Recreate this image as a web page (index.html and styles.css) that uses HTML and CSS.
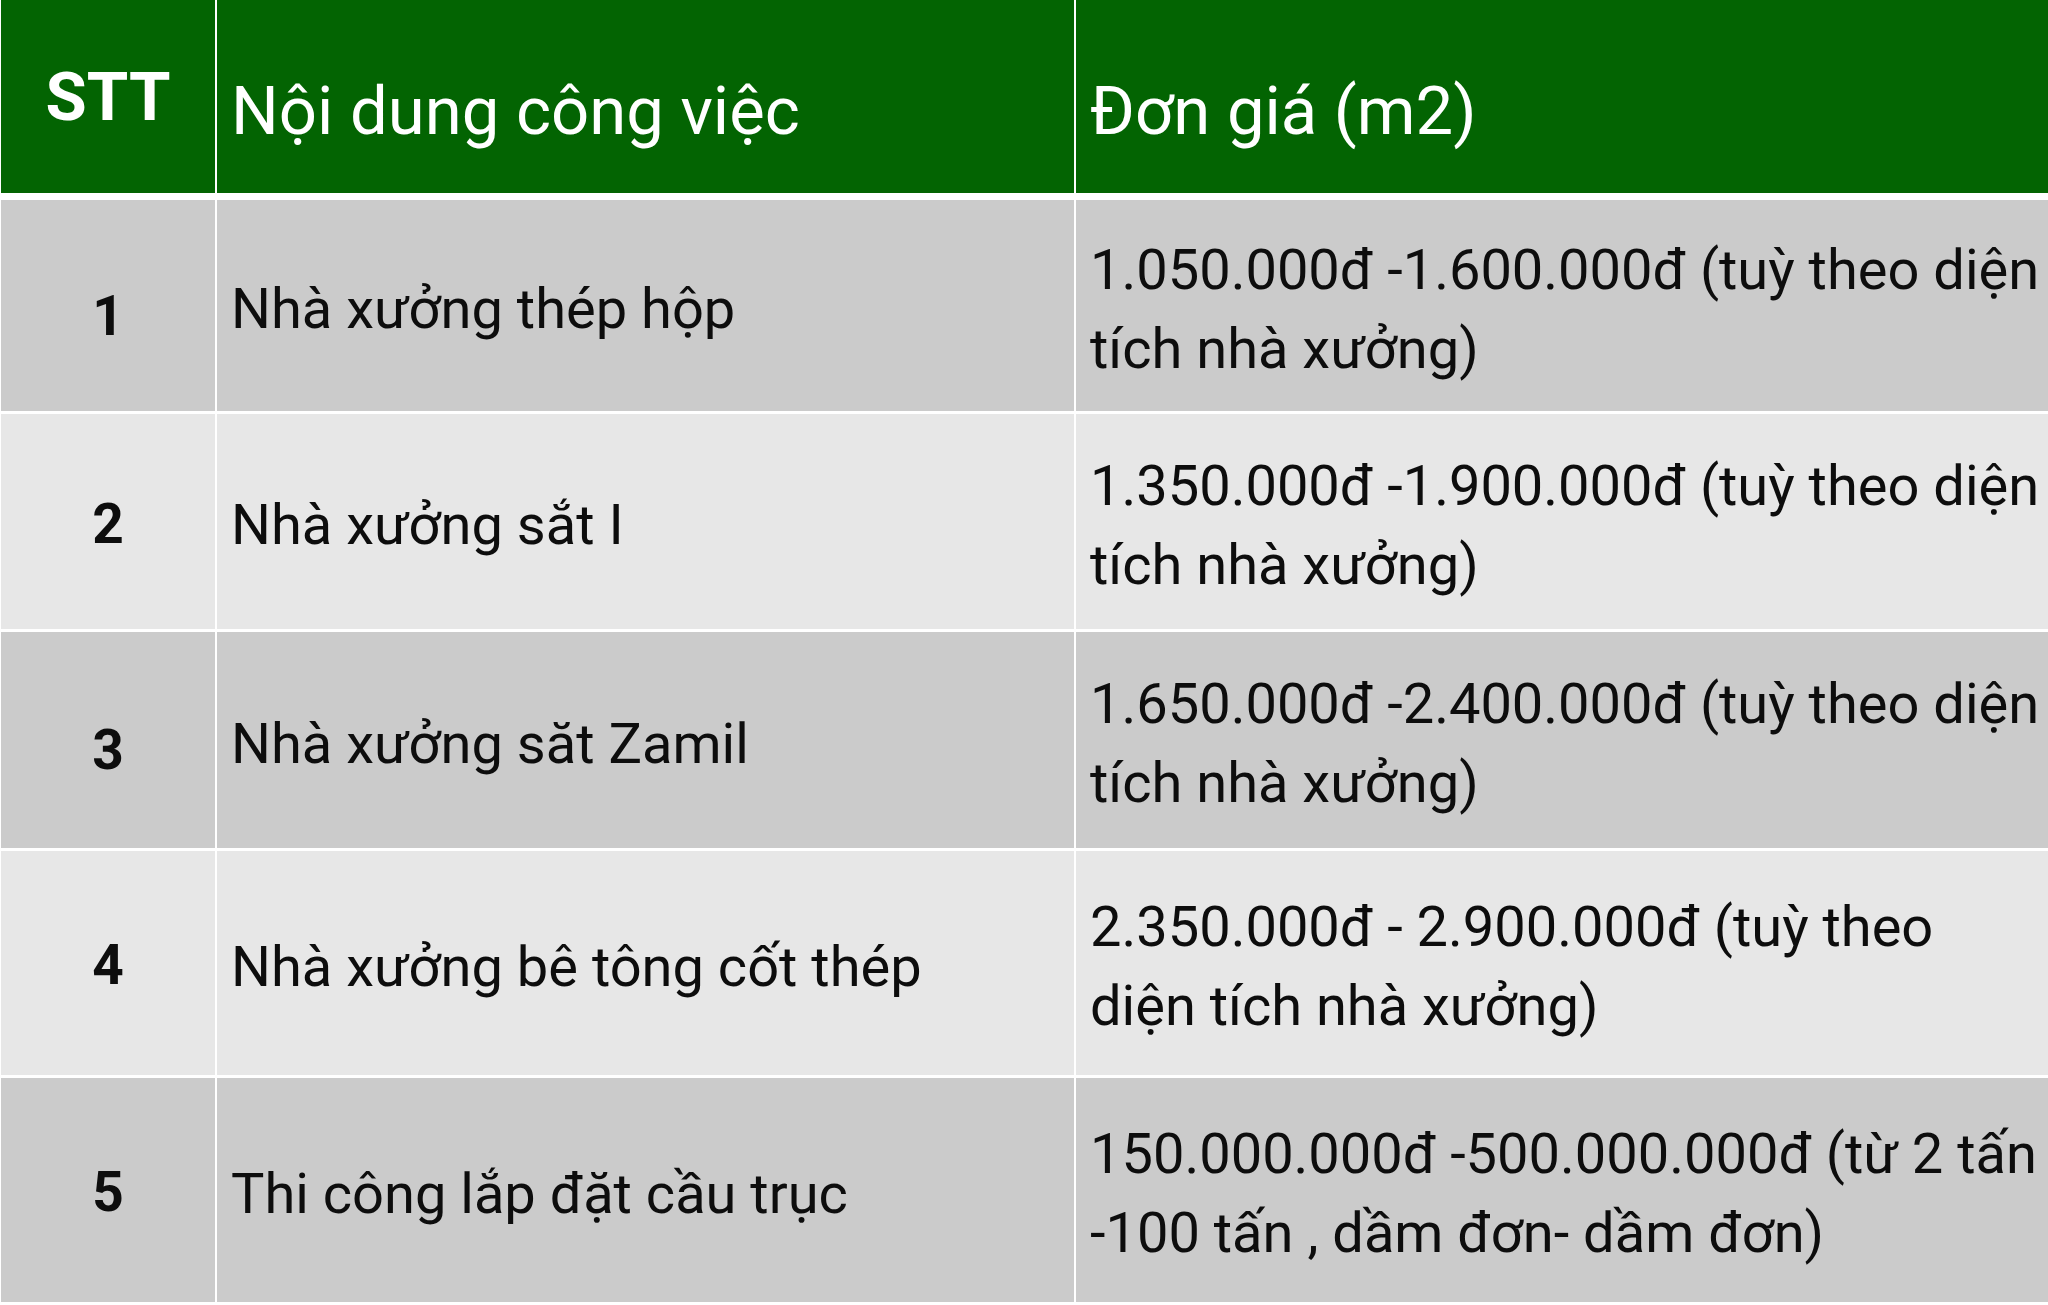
FILE: index.html
```html
<!DOCTYPE html>
<html lang="vi">
<head>
<meta charset="utf-8">
<title>Bảng giá thi công nhà xưởng</title>
<link rel="stylesheet" href="styles.css">
</head>
<body>
<div class="table">
  <div class="row row--head">
    <div class="cell cell--num">STT</div>
    <div class="cell cell--text">Nội dung công việc</div>
    <div class="cell cell--text">Đơn giá (m2)</div>
  </div>
  <div class="row row--odd row--h1">
    <div class="cell cell--num cell--low">1</div>
    <div class="cell cell--text">Nhà xưởng thép hộp</div>
    <div class="cell cell--text">1.050.000đ -1.600.000đ (tuỳ theo diện<br>tích nhà xưởng)</div>
  </div>
  <div class="row row--even row--h2">
    <div class="cell cell--num">2</div>
    <div class="cell cell--text">Nhà xưởng sắt I</div>
    <div class="cell cell--text">1.350.000đ -1.900.000đ (tuỳ theo diện<br>tích nhà xưởng)</div>
  </div>
  <div class="row row--odd row--h3">
    <div class="cell cell--num cell--low">3</div>
    <div class="cell cell--text">Nhà xưởng săt Zamil</div>
    <div class="cell cell--text">1.650.000đ -2.400.000đ (tuỳ theo diện<br>tích nhà xưởng)</div>
  </div>
  <div class="row row--even row--h4">
    <div class="cell cell--num">4</div>
    <div class="cell cell--text">Nhà xưởng bê tông cốt thép</div>
    <div class="cell cell--text">2.350.000đ - 2.900.000đ (tuỳ theo<br>diện tích nhà xưởng)</div>
  </div>
  <div class="row row--odd row--h5">
    <div class="cell cell--num">5</div>
    <div class="cell cell--text">Thi công lắp đặt cầu trục</div>
    <div class="cell cell--text">150.000.000đ -500.000.000đ (từ 2 tấn<br>-100 tấn , dầm đơn- dầm đơn)</div>
  </div>
</div>
</body>
</html>
```

FILE: styles.css
```css
* { box-sizing: border-box; }

html, body {
  margin: 0;
  padding: 0;
  background: #ffffff;
}

body {
  width: 2048px;
  height: 1305px;
  overflow: hidden;
  font-family: Roboto, "Liberation Sans", sans-serif;
}

.table {
  display: flex;
  flex-direction: column;
  gap: 3px;
  padding-left: 1px;
  background: #ffffff;
}

.row {
  display: grid;
  grid-template-columns: 214px 857px 1fr;
  column-gap: 2px;
}

.row--head { height: 193px; margin-bottom: 4px; }
.row--h1 { height: 211px; }
.row--h2 { height: 215px; }
.row--h3 { height: 216px; }
.row--h4 { height: 224px; }
.row--h5 { height: 224px; }

.cell {
  display: flex;
  align-items: center;
  overflow: hidden;
  white-space: nowrap;
}

.row--head .cell { background: #036402; color: #ffffff; }
.row--odd .cell { background: #cbcbcb; color: #0d0d0d; }
.row--even .cell { background: #e7e7e7; color: #0d0d0d; }

.cell--num {
  justify-content: center;
  font-weight: 700;
  font-size: 55px;
  padding-top: 4px;
}

.cell--low { padding-top: 20px; }

.cell--text {
  padding: 8px 10px 0 14px;
  font-size: 56px;
  line-height: 79px;
}

.row--head .cell--num {
  font-size: 67px;
  padding-top: 0;
}

.row--head .cell--text {
  font-size: 67px;
  padding-top: 29px;
}
```
